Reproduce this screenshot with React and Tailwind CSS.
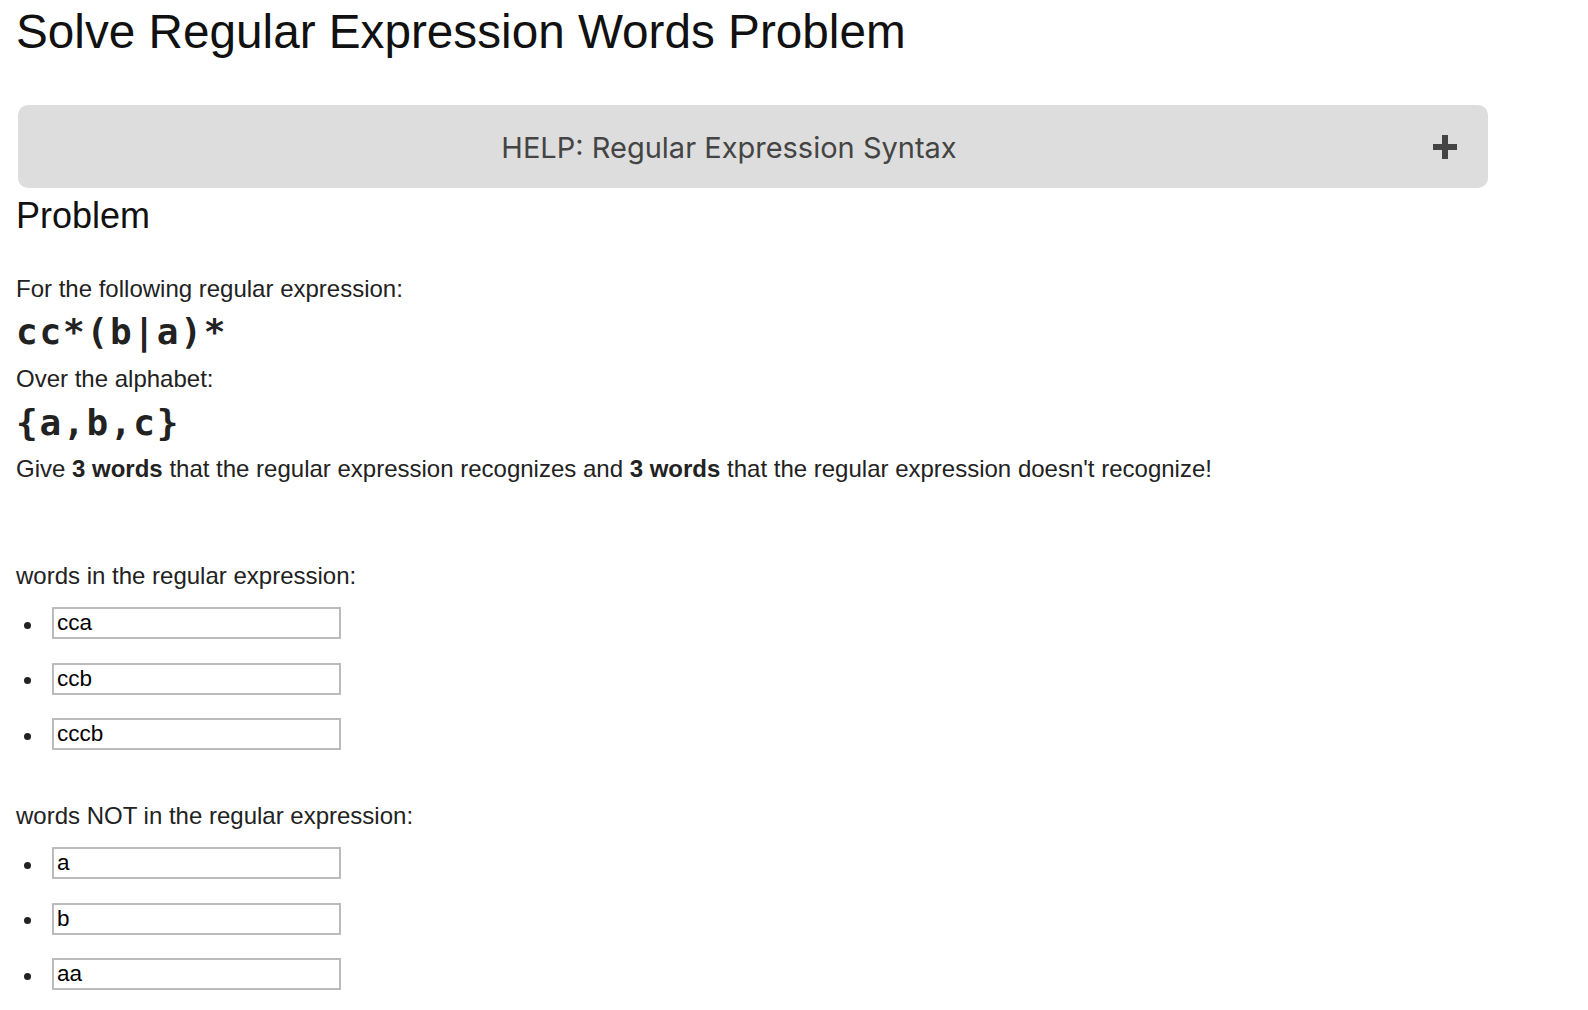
import React from "react";

function WordInput({ value }) {
  return (
    <li className="flex items-center h-[32px]">
      <span className="w-[52px] flex items-center">
        <span className="ml-[24px] mt-[4px] w-[7px] h-[7px] rounded-full bg-[#222]" />
      </span>
      <input
        readOnly
        value={value}
        className="w-[289px] h-[32px] border-2 border-[#bbbbbb] bg-white pl-[3px] pr-[3px] text-[22.5px] text-black outline-none font-['Liberation_Sans',Arial,sans-serif]"
      />
    </li>
  );
}

export default function App() {
  return (
    <div className="min-h-[1010px] bg-white text-[#222] font-['Liberation_Sans',Arial,sans-serif]">
      <h1 className="h-[64px] leading-[64px] pl-[16px] text-[47.7px] text-[#111] font-normal">
        Solve Regular Expression Words Problem
      </h1>
      <div className="mt-[41px] ml-[18px] w-[1470px] h-[83px] rounded-[10px] bg-[#dddddd] flex items-center pl-[10px]">
        <div className="flex-1 text-center text-[29px] text-[#444] font-['Inter',sans-serif] pt-[2px]">
          HELP: Regular Expression Syntax
        </div>
        <div className="w-[30px] mr-[28px] flex items-center justify-center">
          <svg width="24" height="24" viewBox="0 0 24 24">
            <rect x="9" y="0" width="6" height="24" fill="#444" />
            <rect x="0" y="9" width="24" height="6" fill="#444" />
          </svg>
        </div>
      </div>
      <h2 className="h-[56px] leading-[56px] pl-[16px] text-[36px] text-[#111] font-normal">Problem</h2>
      <div className="pl-[16px]">
        <p className="mt-[29px] h-[32px] leading-[32px] text-[24px]">For the following regular expression:</p>
        <div className="h-[54px] leading-[54px] text-[36px] font-bold tracking-[1.8px] text-[#222] font-['DejaVu_Sans_Mono',monospace]">
          cc*(b|a)*
        </div>
        <p className="mt-[4px] h-[32px] leading-[32px] text-[24px]">Over the alphabet:</p>
        <div className="mt-[1px] h-[54px] leading-[54px] text-[36px] font-bold tracking-[1.8px] text-[#222] font-['DejaVu_Sans_Mono',monospace]">
          {"{a,b,c}"}
        </div>
        <p className="mt-[3px] h-[32px] leading-[32px] text-[24px]">
          Give <b>3 words</b> that the regular expression recognizes and <b>3 words</b> that the regular expression doesn't recognize!
        </p>
        <p className="mt-[75px] h-[32px] leading-[32px] text-[24px]">words in the regular expression:</p>
      </div>
      <ul className="mt-[15px] flex flex-col gap-[23.5px]">
        <WordInput value="cca" />
        <WordInput value="ccb" />
        <WordInput value="cccb" />
      </ul>
      <p className="mt-[50px] pl-[16px] h-[32px] leading-[32px] text-[24px]">words NOT in the regular expression:</p>
      <ul className="mt-[15px] flex flex-col gap-[23.5px]">
        <WordInput value="a" />
        <WordInput value="b" />
        <WordInput value="aa" />
      </ul>
    </div>
  );
}
